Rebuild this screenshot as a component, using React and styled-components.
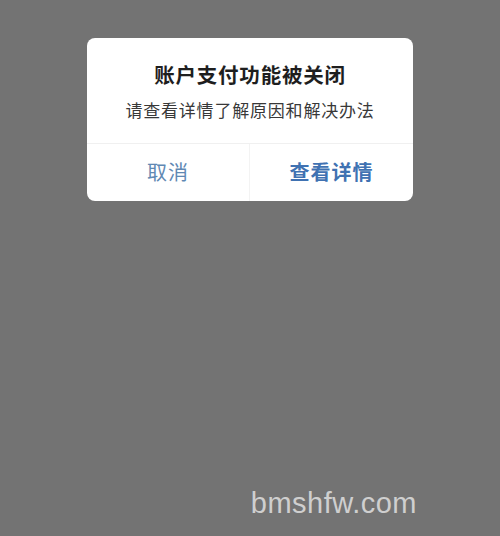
import React from 'react'
import styled, { createGlobalStyle } from 'styled-components'

const GlobalStyle = createGlobalStyle`
  html, body {
    margin: 0;
    padding: 0;
    background: #737373;
  }
  body {
    font-family: "Noto Sans CJK SC", "Liberation Sans", sans-serif;
  }
`

const Screen = styled.div`
  width: 500px;
  height: 536px;
  background: #737373;
  display: flex;
  flex-direction: column;
  align-items: flex-start;
  padding-top: 38px;
  box-sizing: border-box;
`

const Dialog = styled.div`
  margin-left: 87px;
  width: 326px;
  height: 163px;
  background: #fff;
  border-radius: 8px;
  display: flex;
  flex-direction: column;
  overflow: hidden;
`

const Body = styled.div`
  height: 106px;
  display: flex;
  flex-direction: column;
  align-items: center;
  padding-top: 22px;
  box-sizing: border-box;
  border-bottom: 1px solid #f0f0f0;
`

const Title = styled.div`
  font-size: 20.5px;
  line-height: 28px;
  font-weight: 700;
  color: #1e1e1e;
  letter-spacing: 0.8px;
`

const Message = styled.div`
  margin-top: 10px;
  font-size: 17px;
  line-height: 24px;
  color: #383838;
  letter-spacing: 0.8px;
`

const Actions = styled.div`
  flex: 1;
  display: grid;
  grid-template-columns: 162px 1fr;
`

const Action = styled.button`
  border: none;
  background: none;
  padding: 0 0 2px;
  font-family: inherit;
  font-size: 20px;
  letter-spacing: 1px;
  font-weight: ${p => (p.$primary ? 700 : 400)};
  color: ${p => (p.$primary ? '#4072b2' : '#6088b3')};
  border-left: ${p => (p.$primary ? '1px solid #f3f3f3' : 'none')};
`

const Spacer = styled.div`
  flex: 1;
`

const Watermark = styled.div`
  align-self: flex-end;
  margin: 0 83px 16px 0;
  font-family: "Liberation Sans", Arial, sans-serif;
  font-size: 29px;
  color: #cfcfcf;
  letter-spacing: 0.5px;
`

export default () => {
  return (
    <>
      <GlobalStyle />
      <Screen>
        <Dialog>
          <Body>
            <Title>账户支付功能被关闭</Title>
            <Message>请查看详情了解原因和解决办法</Message>
          </Body>
          <Actions>
            <Action>取消</Action>
            <Action $primary>查看详情</Action>
          </Actions>
        </Dialog>
        <Spacer />
        <Watermark>bmshfw.com</Watermark>
      </Screen>
    </>
  )
}
